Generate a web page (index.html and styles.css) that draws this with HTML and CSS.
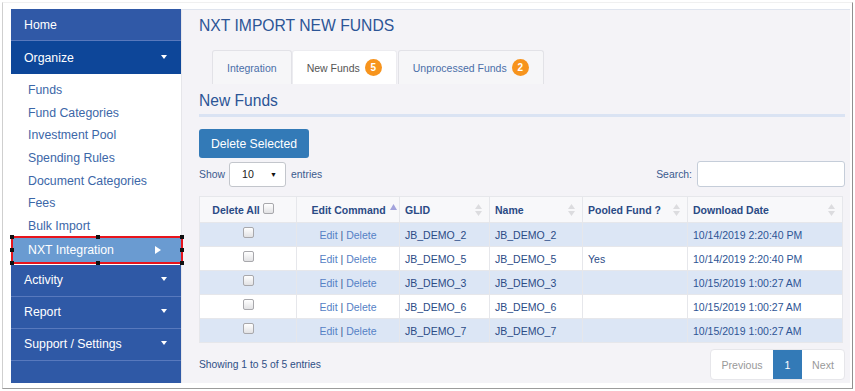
FILE: index.html
```html
<!DOCTYPE html>
<html>
<head>
<meta charset="utf-8">
<link rel="stylesheet" href="styles.css">
</head>
<body>
<div class="frame">
  <div class="app">
    <nav class="sidebar">
      <div class="nav-item home">Home</div>
      <div class="nav-item organize">Organize <span class="caret"></span></div>
      <ul class="submenu">
        <li>Funds</li>
        <li>Fund Categories</li>
        <li>Investment Pool</li>
        <li>Spending Rules</li>
        <li>Document Categories</li>
        <li>Fees</li>
        <li>Bulk Import</li>
        <li class="nxt">NXT Integration <span class="arrow"></span>
          <i class="h tl"></i><i class="h tm"></i><i class="h tr"></i>
          <i class="h ml"></i><i class="h mr"></i>
          <i class="h bl"></i><i class="h bm"></i><i class="h br"></i>
        </li>
      </ul>
      <div class="nav-item">Activity <span class="caret"></span></div>
      <div class="nav-item">Report <span class="caret"></span></div>
      <div class="nav-item">Support / Settings <span class="caret"></span></div>
    </nav>

    <main class="main">
      <h1 class="title">NXT IMPORT NEW FUNDS</h1>
      <div class="tabs">
        <div class="tab link">Integration</div>
        <div class="tab active">New Funds <span class="badge">5</span></div>
        <div class="tab link">Unprocessed Funds <span class="badge">2</span></div>
      </div>
      <h2 class="heading">New Funds</h2>
      <div class="rule"></div>
      <button class="btn">Delete Selected</button>

      <div class="controls">
        <div class="length">Show <span class="select"><span>10</span><span class="sel-caret">&#9660;</span></span> entries</div>
        <div class="search">Search: <span class="input"></span></div>
      </div>

      <table class="grid">
        <colgroup>
          <col class="c1"><col class="c2"><col class="c3"><col class="c4"><col class="c5"><col class="c6">
        </colgroup>
        <thead>
          <tr>
            <th class="center del">Delete All <span class="cb hcb"></span></th>
            <th class="center edit">Edit Command <svg class="asc" width="7" height="6" viewBox="0 0 7 6"><path d="M3.5 0L7 6H0z" fill="#a3a3dc"/></svg></th>
            <th>GLID <svg class="sort" width="7" height="12" viewBox="0 0 7 12"><path d="M3.5 0L7 5H0zM3.5 12L0 7H7z" fill="#dcdcdf"/></svg></th>
            <th>Name <svg class="sort" width="7" height="12" viewBox="0 0 7 12"><path d="M3.5 0L7 5H0zM3.5 12L0 7H7z" fill="#dcdcdf"/></svg></th>
            <th>Pooled Fund ? <svg class="sort" width="7" height="12" viewBox="0 0 7 12"><path d="M3.5 0L7 5H0zM3.5 12L0 7H7z" fill="#dcdcdf"/></svg></th>
            <th>Download Date <svg class="sort" width="7" height="12" viewBox="0 0 7 12"><path d="M3.5 0L7 5H0zM3.5 12L0 7H7z" fill="#dcdcdf"/></svg></th>
          </tr>
        </thead>
        <tbody>
          <tr><td class="center"><span class="cb"></span></td><td class="center cmd"><a>Edit</a> | <a>Delete</a></td><td>JB_DEMO_2</td><td>JB_DEMO_2</td><td></td><td class="date">10/14/2019 2:20:40 PM</td></tr>
          <tr><td class="center"><span class="cb"></span></td><td class="center cmd"><a>Edit</a> | <a>Delete</a></td><td>JB_DEMO_5</td><td>JB_DEMO_5</td><td>Yes</td><td class="date">10/14/2019 2:20:40 PM</td></tr>
          <tr><td class="center"><span class="cb"></span></td><td class="center cmd"><a>Edit</a> | <a>Delete</a></td><td>JB_DEMO_3</td><td>JB_DEMO_3</td><td></td><td class="date">10/15/2019 1:00:27 AM</td></tr>
          <tr><td class="center"><span class="cb"></span></td><td class="center cmd"><a>Edit</a> | <a>Delete</a></td><td>JB_DEMO_6</td><td>JB_DEMO_6</td><td></td><td class="date">10/15/2019 1:00:27 AM</td></tr>
          <tr><td class="center"><span class="cb"></span></td><td class="center cmd"><a>Edit</a> | <a>Delete</a></td><td>JB_DEMO_7</td><td>JB_DEMO_7</td><td></td><td class="date">10/15/2019 1:00:27 AM</td></tr>
        </tbody>
      </table>

      <div class="footer">
        <div class="info">Showing 1 to 5 of 5 entries</div>
        <div class="pager">
          <span class="pg prev">Previous</span>
          <span class="pg cur">1</span>
          <span class="pg next">Next</span>
        </div>
      </div>
    </main>
  </div>
</div>
</body>
</html>
```

FILE: styles.css
```css
* { box-sizing: border-box; }
html, body { margin: 0; padding: 0; background: #fff; }
body {
  font-family: "Liberation Sans", Arial, sans-serif;
  width: 855px;
  height: 391px;
  overflow: hidden;
}

.frame {
  margin-left: 2px;
  margin-top: 2px;
  width: 851px;
  height: 387px;
  border-left: 1px solid #cfcfcf;
  border-right: 1px solid #8f8f8f;
  border-bottom: 1px solid #9c9c9c;
  border-top: 1px solid #f0f0f0;
  padding: 6px 2px 5px 8px;
}

.app {
  display: flex;
  height: 100%;
}

/* Sidebar */
.sidebar {
  width: 170px;
  flex: none;
  background: #2f59a6;
  color: #fff;
  font-size: 12.3px;
  position: relative;
  z-index: 2;
}
.nav-item {
  height: 32px;
  display: flex;
  align-items: center;
  justify-content: space-between;
  padding: 0 14px 0 13px;
  border-bottom: 1px solid #5879bd;
}
.nav-item.home { background: #3059a7; }
.nav-item.organize { background: #0d4699; border-bottom: none; height: 33px; }
.caret {
  width: 0; height: 0;
  border-left: 3.5px solid transparent;
  border-right: 3.5px solid transparent;
  border-top: 4px solid #fff;
  margin-top: -2px;
}
.submenu {
  list-style: none;
  margin: 0;
  padding: 5px 0 1px 0;
  background: #fff;
}
.submenu li {
  height: 22.7px;
  line-height: 22.7px;
  padding-left: 17px;
  color: #3c67a8;
}
.submenu li.nxt {
  position: relative;
  height: 28px;
  line-height: 24px;
  margin-top: -2px;
  margin-right: -2px;
  border: 2px solid #e8141c;
  background: #6a9bd1;
  color: #fff;
  padding-left: 15px;
  display: flex;
  align-items: center;
  justify-content: space-between;
  padding-right: 20px;
}
.arrow {
  width: 0; height: 0;
  border-top: 4.5px solid transparent;
  border-bottom: 4.5px solid transparent;
  border-left: 6px solid #fff;
}
.h {
  position: absolute;
  width: 4px; height: 4px;
  background: #111;
}
.h.tl { left: -3px; top: -3px; }
.h.tm { left: 83px; top: -3px; }
.h.tr { right: -3px; top: -3px; }
.h.ml { left: -3px; top: 10px; }
.h.mr { right: -3px; top: 10px; }
.h.bl { left: -3px; bottom: -3px; }
.h.bm { left: 83px; bottom: -3px; }
.h.br { right: -3px; bottom: -3px; }

/* Main */
.main {
  flex: 1;
  background: #f4f3f7;
  border-top: 1px solid #dfe4ee;
  border-left: 1px solid #e6e6ea;
  padding: 6px 5px 0 17px;
  display: flex;
  flex-direction: column;
  align-items: flex-start;
}
.title {
  margin: 0;
  font-weight: normal;
  font-size: 15.7px;
  line-height: 20px;
  color: #2c5596;
}
.tabs {
  display: flex;
  margin: 14px 0 0 13px;
  height: 34px;
}
.tab {
  height: 34px;
  display: flex;
  align-items: center;
  padding: 0 14px;
  font-size: 10.5px;
  border: 1px solid #e2e2e7;
  border-bottom: none;
  background: #f6f6f8;
  border-radius: 3px 3px 0 0;
}
.tab.link { color: #4a6ea8; }
.tab.active { background: #fff; color: #555; border-color: #ececf0; margin-right: 1px; }
.badge {
  display: inline-flex;
  align-items: center;
  justify-content: center;
  width: 17px;
  height: 17px;
  border-radius: 9px;
  background: #f7941d;
  color: #fff;
  font-weight: bold;
  font-size: 10px;
  margin-left: 5px;
}
.heading {
  margin: 7px 0 0 0;
  font-weight: normal;
  font-size: 15.6px;
  line-height: 20px;
  color: #2c5596;
}
.rule {
  align-self: stretch;
  margin-top: 3px;
  height: 3px;
  background: #dae3f3;
}
.btn {
  margin-top: 12px;
  width: 110px;
  height: 29px;
  border: none;
  border-radius: 3px;
  background: #337ab7;
  color: #fff;
  font-family: inherit;
  font-size: 12.2px;
  padding: 0;
}
.controls {
  align-self: stretch;
  margin-top: 3px;
  height: 26px;
  display: flex;
  justify-content: space-between;
  align-items: center;
  font-size: 10.4px;
  color: #3b5a8e;
}
.length { display: flex; align-items: center; }
.select {
  display: inline-flex;
  align-items: center;
  justify-content: space-between;
  width: 57px;
  height: 25px;
  margin: 0 5px 0 4px;
  padding: 0 8px 0 12px;
  background: #fff;
  border: 1px solid #c3c6cc;
  border-radius: 3px;
  color: #222;
  font-size: 10.6px;
}
.sel-caret { font-size: 7px; color: #111; }
.search { display: flex; align-items: center; }
.input {
  display: inline-block;
  width: 148px;
  height: 26px;
  margin-left: 5px;
  background: #fff;
  border: 1px solid #c5cdd9;
  border-radius: 3px;
}

.grid {
  margin-top: 9px;
  width: 643px;
  table-layout: fixed;
  border-collapse: collapse;
  font-size: 10.5px;
}
.c1 { width: 97px; }
.c2 { width: 103px; }
.c3 { width: 90px; }
.c4 { width: 93px; }
.c5 { width: 105px; }
.c6 { width: 155px; }
.grid th, .grid td {
  border: 1px solid #e6e7eb;
  text-align: left;
  padding: 0 5px;
  white-space: nowrap;
}
.grid th {
  height: 26px;
  background: #f8f8fa;
  color: #2a4a85;
  font-weight: bold;
  position: relative;
}
.grid th.center, .grid td.center { text-align: center; }
.grid th.del { padding: 0 12px 0 2px; }
.grid th.edit { padding: 0 0 0 12px; }
.grid td {
  height: 24px;
  color: #2b4b86;
}
.grid tbody tr:nth-child(odd) td { background: #dce6f5; }
.grid tbody tr:nth-child(even) td { background: #fff; }
.grid td.cmd { color: #3b5a8e; }
.grid td.cmd a { color: #5581c5; }
.grid td.date { color: #2e5595; }
.sort {
  position: absolute;
  right: 7px;
  top: 7px;
}
.asc { vertical-align: 4px; margin-left: 1px; }
.cb {
  display: inline-block;
  width: 11px;
  height: 11px;
  border: 1px solid #a8a8ac;
  border-radius: 2px;
  background: linear-gradient(#ffffff, #e2e2e4);
  vertical-align: 2px;
}
.hcb { vertical-align: 0; }

.footer {
  align-self: stretch;
  margin-top: 6px;
  height: 31px;
  display: flex;
  justify-content: space-between;
  align-items: center;
}
.info { font-size: 10.3px; color: #2f4f86; }
.pager {
  display: flex;
  height: 31px;
  background: #fff;
  border: 1px solid #e6e6ea;
  border-radius: 4px;
  align-items: stretch;
  font-size: 10.6px;
}
.pg {
  display: flex;
  align-items: center;
  justify-content: center;
  color: #999;
}
.pg.prev { width: 62px; }
.pg.cur { width: 29px; background: #337ab7; color: #fff; }
.pg.next { width: 42px; }
```
